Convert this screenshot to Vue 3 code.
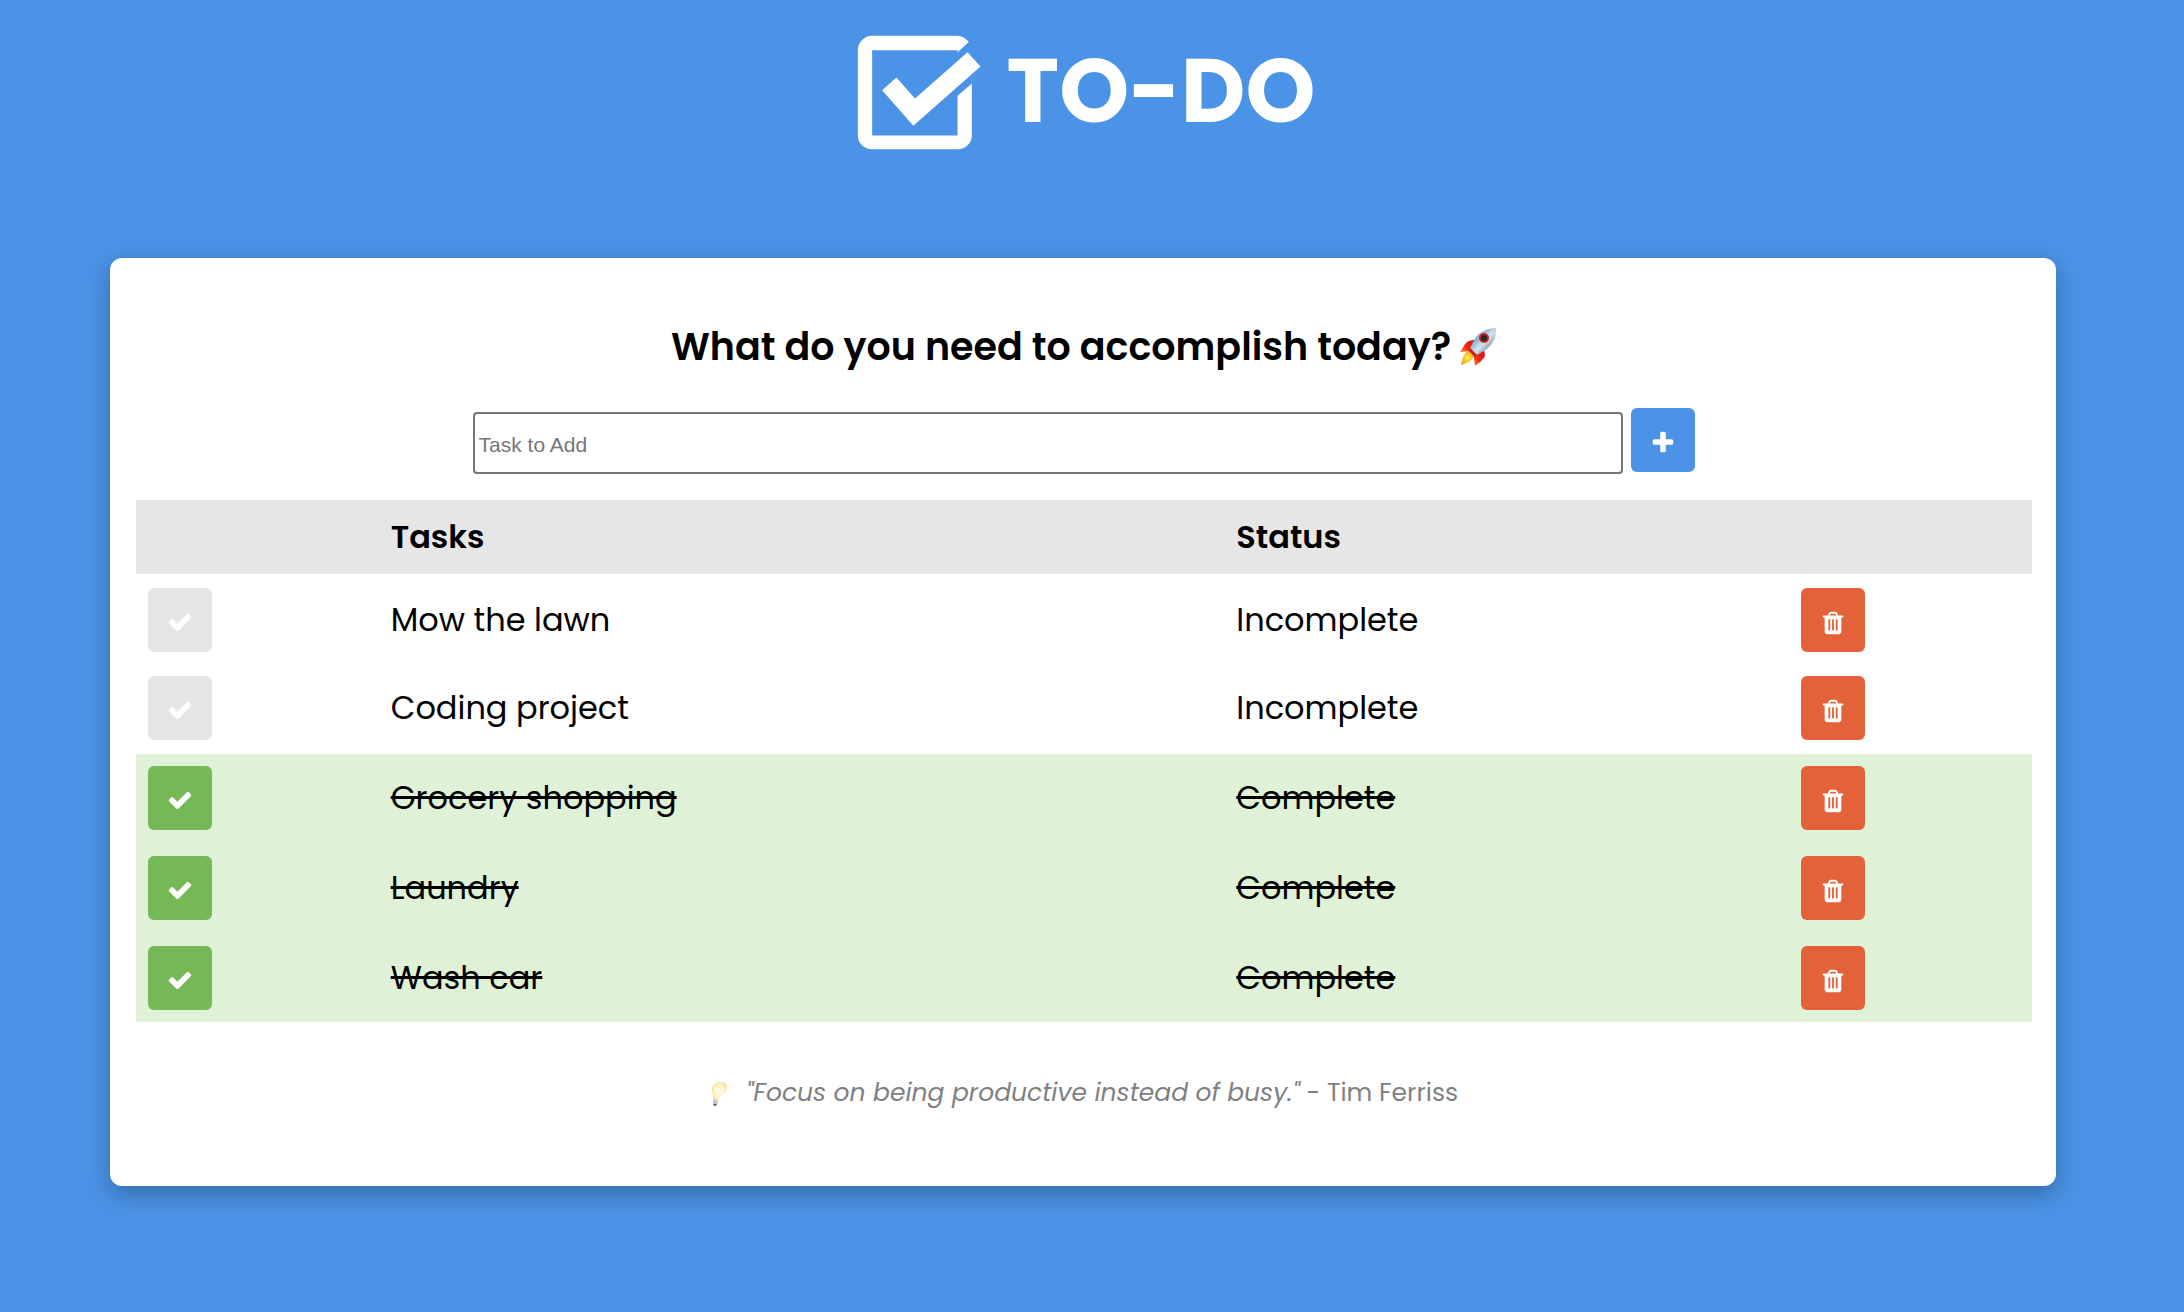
<script setup>
import { ref } from 'vue'

const newTask = ref('')
const tasks = ref([
  { id: 1, name: 'Mow the lawn', done: false },
  { id: 2, name: 'Coding project', done: false },
  { id: 3, name: 'Grocery shopping', done: true },
  { id: 4, name: 'Laundry', done: true },
  { id: 5, name: 'Wash car', done: true }
])

function addTask() {
  const name = newTask.value.trim()
  if (!name) return
  tasks.value.unshift({ id: Date.now(), name, done: false })
  newTask.value = ''
}

function removeTask(id) {
  tasks.value = tasks.value.filter((task) => task.id !== id)
}
</script>

<template>
  <div class="page">
    <header class="brand">
      <svg class="brand-icon" viewBox="50 44 372 346" aria-hidden="true">
        <path d="M352 90V96L386 65C375 52 365 46 352 46H95A43 44 0 0 0 52 90V346A43 42 0 0 0 95 388H352A43 42 0 0 0 395 346V190L352 227V346H95V90Z" />
        <path d="M125 210L168 172L224 235L382 96L421 139L219 317Z" />
      </svg>
      <h1>TO-DO</h1>
    </header>

    <main class="card">
      <h2>
        What do you need to accomplish today?
        <svg class="rocket" viewBox="0 0 38 40" role="img" aria-label="rocket">
          <defs>
            <linearGradient id="hull" x1="0" y1="0" x2="1" y2="1">
              <stop offset="0" stop-color="#3c78ad" />
              <stop offset="0.3" stop-color="#7fadd0" />
              <stop offset="0.55" stop-color="#d0dce6" />
              <stop offset="0.8" stop-color="#71889d" />
              <stop offset="1" stop-color="#466f94" />
            </linearGradient>
            <linearGradient id="fin" x1="1" y1="0" x2="0" y2="1">
              <stop offset="0" stop-color="#c81414" />
              <stop offset="0.6" stop-color="#f02a14" />
              <stop offset="1" stop-color="#ff9a28" />
            </linearGradient>
            <radialGradient id="flame">
              <stop offset="0" stop-color="#fff04a" />
              <stop offset="1" stop-color="#f5a11c" />
            </radialGradient>
          </defs>
          <path fill="url(#fin)" d="M16 13C10 13 7 15 5 19L1 25L13 24Z" />
          <path fill="url(#fin)" d="M25 22L26 29C24 33 20 36 16 39L15 31L14 27Z" />
          <path fill="url(#hull)" d="M37 1C28 1 18 6 14 15L10 24L16 29L25 24C33 19 38 10 37 1Z" />
          <path fill="#d6eaf6" opacity="0.4" d="M36 2C29 4 24 9 20 15L15 23L17 25C25 20 32 12 36 2Z" />
          <path fill="#c41c1c" d="M11 21L18 28L15 30L9 25Z" />
          <path fill="url(#flame)" d="M10 24C5 25 4 30 2 38C8 36 13 34 15 29Z" />
          <circle cx="25" cy="11" r="5" fill="#c8201c" />
          <circle cx="25" cy="11" r="3" fill="#23242c" />
        </svg>
      </h2>

      <form class="add-form" @submit.prevent="addTask">
        <input v-model="newTask" type="text" placeholder="Task to Add" aria-label="Task to Add" />
        <button class="btn add" type="submit" aria-label="Add task">
          <svg viewBox="0 -207 1792 1792" aria-hidden="true">
            <path d="M1600 736v192q0 40-28 68t-68 28h-416v416q0 40-28 68t-68 28h-192q-40 0-68-28t-28-68v-416h-416q-40 0-68-28t-28-68v-192q0-40 28-68t68-28h416v-416q0-40 28-68t68-28h192q40 0 68 28t28 68v416h416q40 0 68 28t28 68z" />
          </svg>
        </button>
      </form>

      <table>
        <colgroup>
          <col class="col-check" />
          <col class="col-task" />
          <col class="col-status" />
          <col />
        </colgroup>
        <thead>
          <tr>
            <th></th>
            <th scope="col">Tasks</th>
            <th scope="col">Status</th>
            <th></th>
          </tr>
        </thead>
        <tbody>
          <tr v-for="task in tasks" :key="task.id" :class="{ done: task.done }">
            <td>
              <button
                class="btn check"
                type="button"
                :aria-label="'Toggle ' + task.name"
                :aria-pressed="task.done"
                @click="task.done = !task.done"
              >
                <svg viewBox="0 -138 1792 1792" aria-hidden="true">
                  <path d="M1671 566q0 40-28 68l-724 724-136 136q-28 28-68 28t-68-28l-136-136-362-362q-28-28-28-68t28-68l136-136q28-28 68-28t68 28l294 295 656-657q28-28 68-28t68 28l136 136q28 28 28 68z" />
                </svg>
              </button>
            </td>
            <td class="label">{{ task.name }}</td>
            <td class="label">{{ task.done ? 'Complete' : 'Incomplete' }}</td>
            <td>
              <button class="btn remove" type="button" :aria-label="'Delete ' + task.name" @click="removeTask(task.id)">
                <svg viewBox="0 -207 1792 1792" aria-hidden="true">
                  <path d="M704 1376v-704q0-14-9-23t-23-9h-64q-14 0-23 9t-9 23v704q0 14 9 23t23 9h64q14 0 23-9t9-23zm256 0v-704q0-14-9-23t-23-9h-64q-14 0-23 9t-9 23v704q0 14 9 23t23 9h64q14 0 23-9t9-23zm256 0v-704q0-14-9-23t-23-9h-64q-14 0-23 9t-9 23v704q0 14 9 23t23 9h64q14 0 23-9t9-23zm-544-992h448l-48-117q-7-9-17-11h-317q-10 2-17 11zm928 32v64q0 14-9 23t-23 9h-96v948q0 83-47 143.5t-113 60.5h-832q-66 0-113-58.5t-47-141.5v-952h-96q-14 0-23-9t-9-23v-64q0-14 9-23t23-9h309l70-167q15-37 54-63t79-26h320q40 0 79 26t54 63l70 167h309q14 0 23 9t9 23z" />
                </svg>
              </button>
            </td>
          </tr>
        </tbody>
      </table>

      <p class="quote">
        <svg class="bulb" viewBox="0 0 18 25" role="img" aria-label="light bulb">
          <defs>
            <radialGradient id="glow" cx="0.5" cy="0.5" r="0.6">
              <stop offset="0" stop-color="#fffef6" />
              <stop offset="0.6" stop-color="#fff3c6" />
              <stop offset="1" stop-color="#f0d27c" />
            </radialGradient>
          </defs>
          <path fill="url(#glow)" d="M11 1C6 1 2 4 2 9C2 13 4 15 3 19L8 20C9 16 17 13 17 7C17 3 14 1 11 1Z" />
          <path fill="#c4c4c6" d="M3 18L8 20L7 24L3 24Z" />
          <path fill="#6c6c70" d="M3 23H7L6 25H4Z" />
        </svg>
        <span><em>"Focus on being productive instead of busy."</em> - Tim Ferriss</span>
      </p>
    </main>
  </div>
</template>

<style>
body {
  margin: 0;
  background: #4a93e6;
}
</style>

<style scoped>
.page {
  padding: 35px 128px 126px 110px;
  color: #000;
  font-family: Poppins, Inter, "Open Sans", sans-serif;
  font-size: 32px;
  line-height: 48px;
}

.brand {
  display: flex;
  align-items: center;
  justify-content: center;
  gap: 26px;
  height: 115px;
  margin-bottom: 108px;
  padding-left: 6px;
  color: #fff;
}

.brand-icon {
  width: 124px;
  height: 115px;
  fill: currentColor;
}

h1 {
  margin: 0;
  padding-bottom: 4px;
  font-size: 89px;
  font-weight: 700;
  line-height: 96px;
}

.card {
  padding: 59px 24px 69px 26px;
  border-radius: 12px;
  background: #fff;
  box-shadow: 0 8px 24px rgba(0, 0, 0, 0.27);
}

h2 {
  display: flex;
  align-items: center;
  justify-content: center;
  gap: 8px;
  margin: 0 0 31px;
  font-size: 38px;
  font-weight: 600;
  line-height: 60px;
}

.rocket {
  width: 38px;
  height: 40px;
}

.add-form {
  display: flex;
  align-items: flex-start;
  gap: 8px;
  width: 64.5%;
  margin: 0 auto 26px;
}

.add-form input {
  flex: 1;
  min-width: 0;
  box-sizing: border-box;
  height: 62px;
  margin: 4px 0 0;
  padding: 4px 4px 0;
  border: 2px solid #767676;
  border-radius: 4px;
  background: #fff;
  font-family: Arial, "Liberation Sans", sans-serif;
  font-size: 21px;
}

.add-form input::placeholder {
  color: #767676;
}

.btn {
  display: flex;
  align-items: center;
  justify-content: center;
  flex: none;
  width: 64px;
  height: 64px;
  padding: 0;
  border: 0;
  border-radius: 6px;
  color: #fff;
  cursor: pointer;
}

.btn svg {
  width: 26px;
  height: 26px;
  overflow: visible;
  fill: currentColor;
}

.add {
  background: #4a93e6;
}

.check {
  background: #e6e6e6;
}

.done .check {
  background: #76b856;
}

.remove {
  background: #e36239;
}

table {
  width: 100%;
  border-collapse: collapse;
  table-layout: fixed;
}

.col-check {
  width: 12.8%;
}

.col-task {
  width: 44.6%;
}

.col-status {
  width: 29.8%;
}

th {
  padding: 13px 12px;
  background: #e6e6e6;
  font-weight: 600;
  text-align: left;
}

td {
  padding: 12px 12px 14px;
}

tbody tr:first-child td {
  padding: 14px 12px 12px;
}

tbody tr:last-child td {
  padding-bottom: 12px;
}

.done {
  background: #dff1d7;
}

.done .label {
  text-decoration: line-through;
}

.quote {
  display: flex;
  align-items: center;
  justify-content: center;
  gap: 18px;
  margin: 47px 0 0;
  color: #808080;
  font-size: 25px;
}

.bulb {
  width: 18px;
  height: 25px;
}
</style>
